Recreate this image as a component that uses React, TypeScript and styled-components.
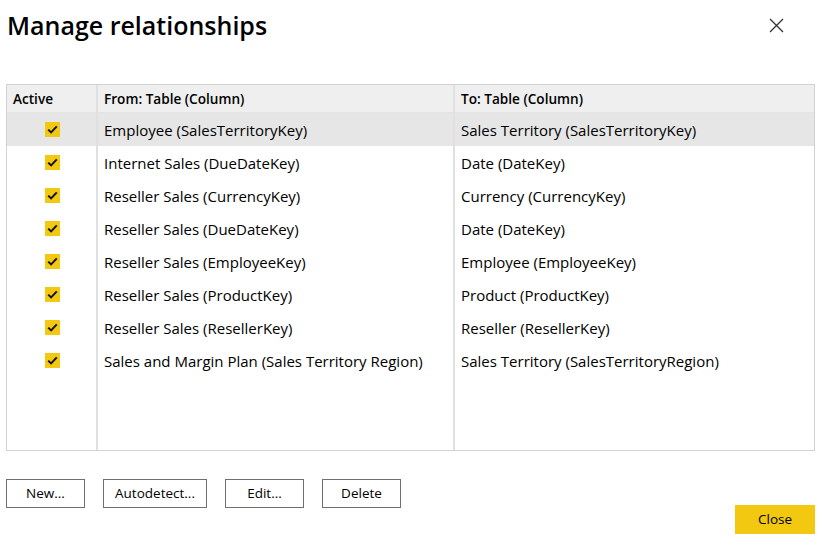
import React from "react";
import styled, { createGlobalStyle } from "styled-components";

const Global = createGlobalStyle`
  html, body { margin: 0; padding: 0; background: #fff; }
  body { font-family: "Open Sans", "Noto Sans", sans-serif; color: #000; }
`;

const Dialog = styled.div`
  width: 824px;
  height: 550px;
  box-sizing: border-box;
  padding: 0 9px 0 6px;
  display: flex;
  flex-direction: column;
`;

const Header = styled.div`
  display: flex;
  align-items: center;
  justify-content: space-between;
  height: 50px;
  padding-left: 1px;
`;

const Title = styled.h1`
  margin: 0;
  font-size: 25px;
  font-weight: 600;
  letter-spacing: 0;
`;

const CloseX = styled.button`
  border: none;
  background: none;
  padding: 0;
  margin-right: 29px;
  width: 20px;
  height: 20px;
  display: flex;
  align-items: center;
  justify-content: center;
`;

const TableBox = styled.div`
  margin-top: 34px;
  height: 365px;
  border: 1px solid #d2d2d2;
  display: grid;
  grid-template-columns: 91px 357px 1fr;
  grid-template-rows: 28px repeat(8, 33px) 1fr;
  font-size: 15px;
`;

const HeadCell = styled.div<{ $last?: boolean }>`
  background: #efefef;
  font-weight: 600;
  font-size: 13.6px;
  display: flex;
  align-items: center;
  padding-left: 6px;
  border-right: ${(p) => (p.$last ? "none" : "2px solid #e0e0e0")};
  border-bottom: 1px solid #e3e3e3;
`;

const Cell = styled.div<{ $sel?: boolean; $center?: boolean; $last?: boolean }>`
  background: ${(p) => (p.$sel ? "#e6e6e6" : "#fff")};
  display: flex;
  align-items: center;
  justify-content: ${(p) => (p.$center ? "center" : "flex-start")};
  padding-left: ${(p) => (p.$center ? "0" : "6px")};
  border-right: ${(p) => (p.$last ? "none" : "2px solid #e0e0e0")};
  white-space: nowrap;
`;

const Check = styled.span`
  width: 15px;
  height: 15px;
  background: #f2c811;
  display: flex;
  align-items: center;
  justify-content: center;
  margin-left: 1px;
`;

const Footer = styled.div`
  display: flex;
  flex-direction: column;
  margin-top: 28px;
`;

const ButtonRow = styled.div`
  display: flex;
  gap: 18px;
`;

const Btn = styled.button<{ $w: number }>`
  width: ${(p) => p.$w}px;
  height: 29px;
  background: #fff;
  border: 1px solid #6f6f6f;
  font-family: "Open Sans", "Noto Sans", sans-serif;
  font-size: 13.5px;
  color: #000;
  padding: 0 0 2px;
`;

const CloseRow = styled.div`
  display: flex;
  justify-content: flex-end;
  margin-top: -3px;
`;

const PrimaryBtn = styled.button`
  width: 80px;
  height: 29px;
  background: #f2c811;
  border: none;
  font-family: "Open Sans", "Noto Sans", sans-serif;
  font-size: 13.5px;
  color: #000;
  padding: 0 0 2px;
`;

const rows: [string, string][] = [
  ["Employee (SalesTerritoryKey)", "Sales Territory (SalesTerritoryKey)"],
  ["Internet Sales (DueDateKey)", "Date (DateKey)"],
  ["Reseller Sales (CurrencyKey)", "Currency (CurrencyKey)"],
  ["Reseller Sales (DueDateKey)", "Date (DateKey)"],
  ["Reseller Sales (EmployeeKey)", "Employee (EmployeeKey)"],
  ["Reseller Sales (ProductKey)", "Product (ProductKey)"],
  ["Reseller Sales (ResellerKey)", "Reseller (ResellerKey)"],
  ["Sales and Margin Plan (Sales Territory Region)", "Sales Territory (SalesTerritoryRegion)"],
];

const CheckMark = () => (
  <Check>
    <svg width="11" height="9" viewBox="0 0 11 9">
      <path d="M1.2 4.6 L4.1 7.4 L9.8 1.4" fill="none" stroke="#111" strokeWidth="2" />
    </svg>
  </Check>
);

export default function App() {
  return (
    <>
      <Global />
      <Dialog>
        <Header>
          <Title>Manage relationships</Title>
          <CloseX aria-label="Close">
            <svg width="15" height="15" viewBox="0 0 15 15">
              <path d="M1 1 L14 14 M14 1 L1 14" stroke="#333" strokeWidth="1.3" />
            </svg>
          </CloseX>
        </Header>
        <TableBox>
          <HeadCell>Active</HeadCell>
          <HeadCell>From: Table (Column)</HeadCell>
          <HeadCell $last>To: Table (Column)</HeadCell>
          {rows.map(([from, to], i) => (
            <React.Fragment key={i}>
              <Cell $sel={i === 0} $center>
                <CheckMark />
              </Cell>
              <Cell $sel={i === 0}>{from}</Cell>
              <Cell $sel={i === 0} $last>
                {to}
              </Cell>
            </React.Fragment>
          ))}
          <Cell />
          <Cell />
          <Cell $last />
        </TableBox>
        <Footer>
          <ButtonRow>
            <Btn $w={79}>New...</Btn>
            <Btn $w={104}>Autodetect...</Btn>
            <Btn $w={79}>Edit...</Btn>
            <Btn $w={79}>Delete</Btn>
          </ButtonRow>
          <CloseRow>
            <PrimaryBtn>Close</PrimaryBtn>
          </CloseRow>
        </Footer>
      </Dialog>
    </>
  );
}
